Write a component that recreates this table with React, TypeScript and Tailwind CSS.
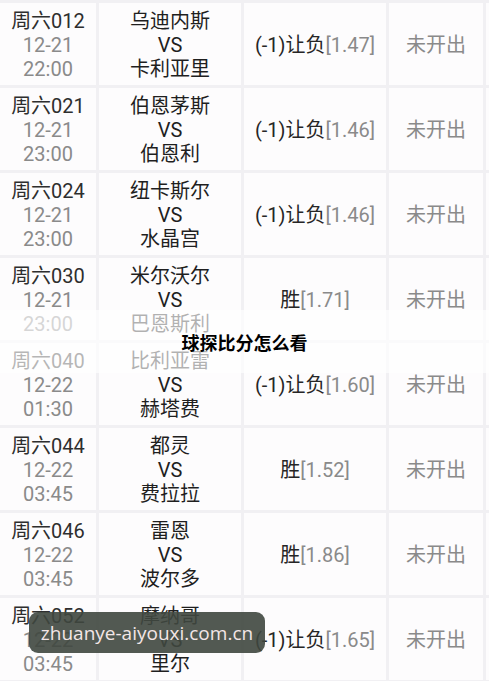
import React from 'react';

const matches = [
  { no: '周六012', date: '12-21', time: '22:00', home: '乌迪内斯', away: '卡利亚里', pick: '(-1)让负', odds: '[1.47]' },
  { no: '周六021', date: '12-21', time: '23:00', home: '伯恩茅斯', away: '伯恩利', pick: '(-1)让负', odds: '[1.46]' },
  { no: '周六024', date: '12-21', time: '23:00', home: '纽卡斯尔', away: '水晶宫', pick: '(-1)让负', odds: '[1.46]' },
  { no: '周六030', date: '12-21', time: '23:00', home: '米尔沃尔', away: '巴恩斯利', pick: '胜', odds: '[1.71]' },
  { no: '周六040', date: '12-22', time: '01:30', home: '比利亚雷', away: '赫塔费', pick: '(-1)让负', odds: '[1.60]' },
  { no: '周六044', date: '12-22', time: '03:45', home: '都灵', away: '费拉拉', pick: '胜', odds: '[1.52]' },
  { no: '周六046', date: '12-22', time: '03:45', home: '雷恩', away: '波尔多', pick: '胜', odds: '[1.86]' },
  { no: '周六052', date: '12-22', time: '03:45', home: '摩纳哥', away: '里尔', pick: '(-1)让负', odds: '[1.65]' },
];

const App = () => {
  return (
    <div
      className="relative w-[489px] h-[681px] overflow-hidden bg-[#f1f0f3] text-[20px] leading-[24px]"
      style={{ fontFamily: 'Roboto, "Noto Sans CJK SC", sans-serif' }}
    >
      <div className="flex flex-col gap-[3px] pt-[3px]">
        {matches.map((m) => (
          <div key={m.no} className="grid grid-cols-[96px_142px_142px_94px_1fr] gap-[3px] h-[82px]">
            <div className="bg-[#fdfcfd] flex flex-col items-center justify-center pt-[2px]">
              <span className="text-[#2e2e2e]">{m.no}</span>
              <span className="text-[#8a8a8a]">{m.date}</span>
              <span className="text-[#8a8a8a]">{m.time}</span>
            </div>
            <div className="bg-[#fdfcfd] flex flex-col items-center justify-center pt-[2px] text-[#1f1f1f]">
              <span>{m.home}</span>
              <span>VS</span>
              <span>{m.away}</span>
            </div>
            <div className="bg-[#fdfcfd] flex items-center justify-center pt-[2px]">
              <span className="text-[#262626]">{m.pick}</span>
              <span className="text-[#8a8a8a]">{m.odds}</span>
            </div>
            <div className="bg-[#fdfcfd] flex items-center justify-center pt-[2px] text-[#8a8a8a]">
              未开出
            </div>
            <div className="bg-[#fdfcfd]" />
          </div>
        ))}
      </div>

      <div className="absolute left-0 right-0 top-[310px] h-[63px] bg-white/65 flex items-center justify-center">
        <span className="text-[18px] font-bold text-black" style={{ fontFamily: '"Noto Sans CJK SC", sans-serif' }}>
          球探比分怎么看
        </span>
      </div>

      <div className="absolute left-[29px] top-[612px] w-[236px] h-[41px] rounded-[9px] bg-[#3f473f]/90 flex items-center justify-center">
        <span className="text-[19px] text-[#f3e6e6]" style={{ fontFamily: '"Open Sans", "Noto Sans", sans-serif' }}>
          zhuanye-aiyouxi.com.cn
        </span>
      </div>
    </div>
  );
};

export default App;
